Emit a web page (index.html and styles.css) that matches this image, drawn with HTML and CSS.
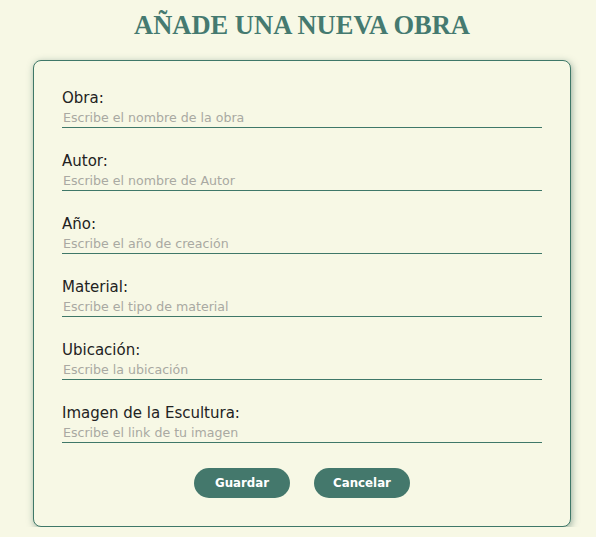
FILE: index.html
```html
<!DOCTYPE html>
<html lang="es">
<head>
<meta charset="utf-8">
<title>Añade una nueva obra</title>
<link rel="stylesheet" href="styles.css">
</head>
<body>
<main class="page">
  <h1 class="title">AÑADE UNA NUEVA OBRA</h1>
  <form class="card">
    <div class="field">
      <label class="label" for="obra">Obra:</label>
      <input class="input" id="obra" type="text" placeholder="Escribe el nombre de la obra">
    </div>
    <div class="field">
      <label class="label" for="autor">Autor:</label>
      <input class="input" id="autor" type="text" placeholder="Escribe el nombre de Autor">
    </div>
    <div class="field">
      <label class="label" for="anio">Año:</label>
      <input class="input" id="anio" type="text" placeholder="Escribe el año de creación">
    </div>
    <div class="field">
      <label class="label" for="material">Material:</label>
      <input class="input" id="material" type="text" placeholder="Escribe el tipo de material">
    </div>
    <div class="field">
      <label class="label" for="ubicacion">Ubicación:</label>
      <input class="input" id="ubicacion" type="text" placeholder="Escribe la ubicación">
    </div>
    <div class="field">
      <label class="label" for="imagen">Imagen de la Escultura:</label>
      <input class="input" id="imagen" type="text" placeholder="Escribe el link de tu imagen">
    </div>
    <div class="actions">
      <button class="btn" type="button">Guardar</button>
      <button class="btn" type="button">Cancelar</button>
    </div>
  </form>
</main>
</body>
</html>
```
FILE: styles.css
```css
html, body {
  margin: 0;
  padding: 0;
  background: #f7f8e5;
}
body {
  padding-left: 8px;
  font-family: "DejaVu Sans", sans-serif;
}
.page {
  display: flex;
  flex-direction: column;
  align-items: center;
}
.title {
  margin: 8px 0 0;
  height: 52px;
  font-family: "Liberation Serif", serif;
  font-weight: bold;
  font-size: 26.5px;
  line-height: 34px;
  color: #457a70;
}
.card {
  box-sizing: border-box;
  width: 538px;
  padding: 28px 28px 28px;
  border: 1px solid #3f7868;
  border-radius: 8px;
  background: #f7f8e5;
  box-shadow: 1px 2px 7px rgba(55, 100, 85, 0.5);
  display: flex;
  flex-direction: column;
  gap: 24px;
}
.field {
  display: flex;
  flex-direction: column;
}
.label {
  font-size: 15px;
  line-height: 18px;
  color: #222;
}
.input {
  box-sizing: border-box;
  height: 21px;
  padding: 0 1px;
  margin: 0;
  border: none;
  border-bottom: 1px solid #3f7868;
  background: transparent;
  font-family: "DejaVu Sans", sans-serif;
  font-size: 12.6px;
  color: #333;
  outline: none;
}
.input::placeholder {
  color: #a9a9a2;
}
.actions {
  display: flex;
  justify-content: center;
  gap: 24px;
  margin-top: 1px;
}
.btn {
  width: 96px;
  height: 30px;
  border: none;
  border-radius: 15px;
  background: #44786c;
  color: #fff;
  font-family: "DejaVu Sans", sans-serif;
  font-weight: bold;
  font-size: 11.8px;
  cursor: pointer;
}
```
